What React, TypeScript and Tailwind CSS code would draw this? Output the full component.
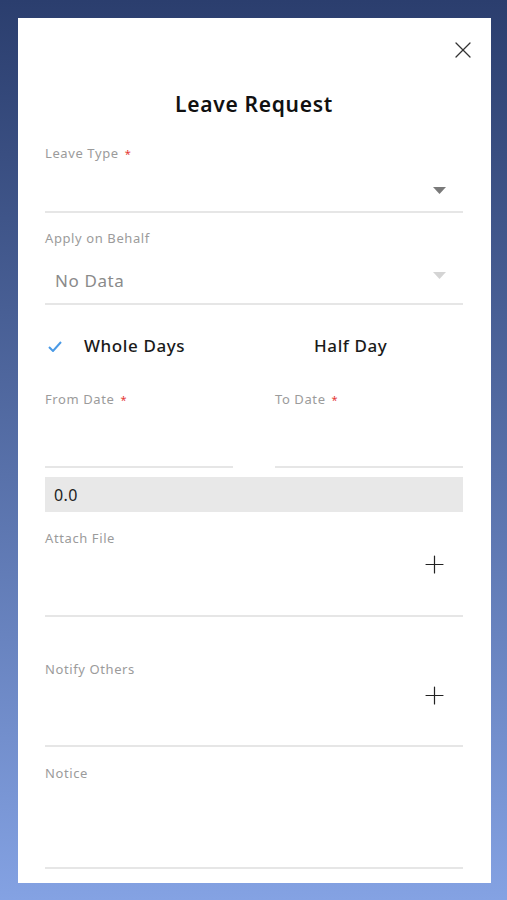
import { X, Plus } from "lucide-react";

const font = { fontFamily: '"Noto Sans", "Open Sans", sans-serif' };

function Label({ text, required }: { text: string; required?: boolean }) {
  return (
    <div className="h-[18px] text-[13px] leading-[18px] tracking-[0.6px] text-[#9b9b9b]">
      {text}
      {required && <span className="ml-[6px] text-[11px] text-[#e53935]">*</span>}
    </div>
  );
}

function Caret({ light }: { light?: boolean }) {
  return (
    <svg width="13" height="7" viewBox="0 0 13 7" className="mr-[17px]">
      <path d="M0 0h13L6.5 7z" fill={light ? "#d4d4d4" : "#7a7a7a"} />
    </svg>
  );
}

export default function App() {
  return (
    <div
      className="min-h-screen bg-gradient-to-b from-[#2b3e6e] to-[#84a2e3] py-[18px] pb-[17px] pl-[18px] pr-[16px]"
      style={font}
    >
      <div className="flex h-[865px] flex-col bg-white pl-[27px] pr-[28px]">
        <div className="flex justify-end pt-[18px]">
          <X className="mr-[-14px] h-[28px] w-[28px] text-[#333]" strokeWidth={1.1} />
        </div>
        <h1 className="mt-[26px] text-center text-[21px] font-semibold leading-[28px] tracking-[0.7px] text-[#111]">
          Leave Request
        </h1>

        <div className="mt-[26px]">
          <Label text="Leave Type" required />
        </div>
        <div className="flex h-[51px] items-center justify-end border-b-2 border-[#e6e6e6] pt-[8px]">
          <Caret />
        </div>

        <div className="mt-[16px]">
          <Label text="Apply on Behalf" />
        </div>
        <div className="flex h-[58px] items-center justify-between border-b-2 border-[#e6e6e6] pt-[11px]">
          <span className="ml-[10px] text-[17px] tracking-[0.6px] text-[#8a8a8a]">No Data</span>
          <span className="mb-[10px]">
            <Caret light />
          </span>
        </div>

        <div className="mt-[27px] grid h-[28px] grid-cols-2 gap-[42px]">
          <div className="flex items-center">
            <span className="flex w-[39px] items-center pl-[3px]">
              <svg width="14" height="11" viewBox="0 0 14 11">
                <path d="M1 6l4 4 8-9" fill="none" stroke="#4a9ae6" strokeWidth="2" />
              </svg>
            </span>
            <span className="text-[17px] font-medium tracking-[0.6px] text-[#1a1a1a]">Whole Days</span>
          </div>
          <div className="flex items-center">
            <span className="w-[39px]" />
            <span className="text-[17px] font-medium tracking-[0.6px] text-[#1a1a1a]">Half Day</span>
          </div>
        </div>

        <div className="mt-[30px] grid grid-cols-2 gap-[42px]">
          <div>
            <Label text="From Date" required />
            <div className="h-[60px] border-b-2 border-[#e6e6e6]" />
          </div>
          <div>
            <Label text="To Date" required />
            <div className="h-[60px] border-b-2 border-[#e6e6e6]" />
          </div>
        </div>

        <div className="mt-[9px] flex h-[35px] items-center bg-[#e8e8e8] px-[9px] text-[16px] tracking-[0.4px] text-[#222]">
          0.0
        </div>

        <div className="mt-[17px]">
          <Label text="Attach File" />
        </div>
        <div className="flex h-[70px] items-start justify-end border-b-2 border-[#e6e6e6] pt-[3px]">
          <Plus className="mr-[14px] h-[29px] w-[29px] text-[#222]" strokeWidth={1} />
        </div>

        <div className="mt-[43px]">
          <Label text="Notify Others" />
        </div>
        <div className="flex h-[69px] items-start justify-end border-b-2 border-[#e6e6e6] pt-[3px]">
          <Plus className="mr-[14px] h-[29px] w-[29px] text-[#222]" strokeWidth={1} />
        </div>

        <div className="mt-[17px]">
          <Label text="Notice" />
        </div>
        <div className="h-[87px] border-b-2 border-[#e6e6e6]" />
      </div>
    </div>
  );
}
